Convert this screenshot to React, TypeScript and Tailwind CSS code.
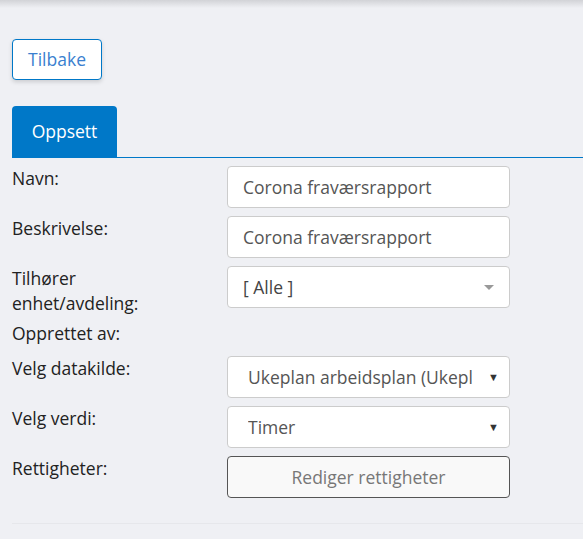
import React from "react"

const font = { fontFamily: '"Open Sans", "Liberation Sans", sans-serif' }

function Label({ children }: { children: React.ReactNode }) {
  return <div className="w-[215px] shrink-0 text-[17.5px] leading-[25px] text-[#222]">{children}</div>
}

function Row({ children }: { children: React.ReactNode }) {
  return <div className="flex h-[42px]">{children}</div>
}

function TextField({ value }: { value: string }) {
  return (
    <div className="flex h-[42px] w-[283px] items-center rounded border border-[#ccc] bg-white pl-[15px] text-[17.5px] text-[#555]">
      {value}
    </div>
  )
}

function NativeSelect({ value }: { value: string }) {
  return (
    <div className="flex h-[42px] w-[283px] items-center rounded border border-[#ccc] bg-white pl-[20px] pr-[10px] text-[17.5px] text-[#555]">
      <span className="flex-1 overflow-hidden whitespace-nowrap">{value}</span>
      <span className="ml-[16px] text-[11px] text-[#333]">▼</span>
    </div>
  )
}

export default function App() {
  return (
    <div className="min-h-[539px] w-full bg-[#eff0f4]" style={font}>
      <div className="h-[8px] bg-gradient-to-b from-[#d2d3d7] to-[#eff0f4]" />
      <div className="px-[12px] pt-[31px]">
        <button className="h-[41px] w-[90px] rounded border border-[#0078c8] bg-white text-[17.5px] text-[#3a7fcf] shadow-[0_2px_4px_rgba(0,0,0,0.15)]">
          Tilbake
        </button>

        <div className="mt-[26px] flex border-b border-[#0078c8] -mr-[12px]">
          <div className="flex h-[51px] w-[105px] items-center justify-center rounded-t bg-[#0078c8] text-[17.5px] text-white">
            Oppsett
          </div>
        </div>

        <div className="flex flex-col gap-[8px] pt-[8px]">
          <Row>
            <Label>Navn:</Label>
            <TextField value="Corona fraværsrapport" />
          </Row>
          <Row>
            <Label>Beskrivelse:</Label>
            <TextField value="Corona fraværsrapport" />
          </Row>
          <Row>
            <Label>
              Tilhører
              <br />
              enhet/avdeling:
            </Label>
            <div className="flex h-[42px] w-[283px] items-center rounded border border-[#ccc] bg-white pl-[15px] pr-[15px] text-[17.5px] text-[#444]">
              <span className="flex-1">[ Alle ]</span>
              <span className="h-0 w-0 border-x-[5px] border-t-[5px] border-x-transparent border-t-[#999]" />
            </div>
          </Row>
          <div className="flex h-[32px] pt-[5px]">
            <Label>Opprettet av:</Label>
          </div>
          <Row>
            <Label>Velg datakilde:</Label>
            <NativeSelect value="Ukeplan arbeidsplan (Ukeplan)" />
          </Row>
          <Row>
            <Label>Velg verdi:</Label>
            <NativeSelect value="Timer" />
          </Row>
          <Row>
            <Label>Rettigheter:</Label>
            <button className="h-[42px] w-[283px] rounded border border-[#555] bg-[#f9f9f9] text-[17.5px] text-[#777]">
              Rediger rettigheter
            </button>
          </Row>
        </div>

        <div className="mt-[25px] -mr-[12px] border-b border-[#e6e7eb]" />
      </div>
    </div>
  )
}
